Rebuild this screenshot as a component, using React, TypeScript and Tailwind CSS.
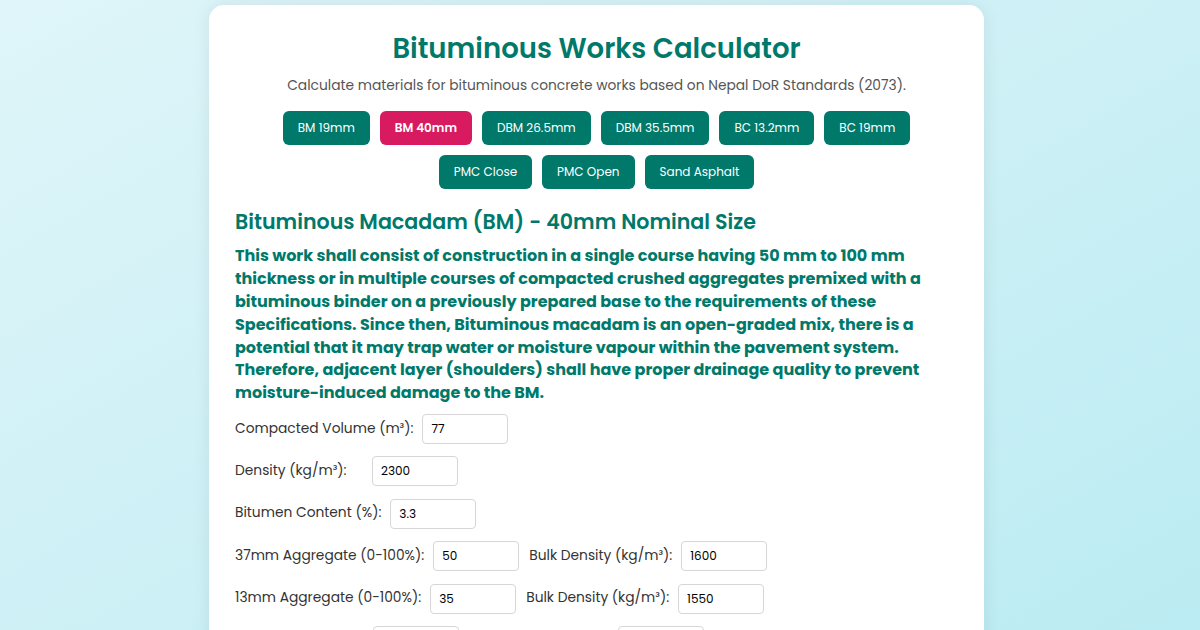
import { useState } from "react";

const mixes = [
  "BM 19mm",
  "BM 40mm",
  "DBM 26.5mm",
  "DBM 35.5mm",
  "BC 13.2mm",
  "BC 19mm",
  "PMC Close",
  "PMC Open",
  "Sand Asphalt",
];

function Field({
  label,
  value,
  labelClass = "",
}: {
  label: string;
  value: string;
  labelClass?: string;
}) {
  return (
    <div className="flex items-center gap-[9px]">
      <label className={`shrink-0 whitespace-nowrap text-[13.8px] text-[#333] ${labelClass}`}>
        {label}
      </label>
      <input
        defaultValue={value}
        className="h-[30px] w-[86px] rounded-[4px] border border-[#d6d6d6] px-2 text-[12px] text-black outline-none"
      />
    </div>
  );
}

export default function App() {
  const [active, setActive] = useState("BM 40mm");

  return (
    <div
      className="flex min-h-[630px] justify-center bg-gradient-to-br from-[#dff5f9] to-[#b9ebf2] pr-[7px] pt-[5px]"
      style={{ fontFamily: "Poppins, 'Open Sans', sans-serif" }}
    >
      <div className="w-[775px] rounded-[15px] bg-white px-[26px] pt-[27px] pb-10 shadow-[0_0_18px_rgba(0,0,0,0.08)]">
        <h1 className="text-center text-[27.5px] leading-[1.2] font-semibold text-[#00796b]">
          Bituminous Works Calculator
        </h1>
        <p className="mt-[11px] text-center text-[13.8px] leading-[1.5] text-[#555]">
          Calculate materials for bituminous concrete works based on Nepal DoR Standards (2073).
        </p>

        <div className="mt-[14px] flex flex-wrap justify-center gap-[10px]">
          {mixes.map((m) => (
            <button
              key={m}
              onClick={() => setActive(m)}
              className={`h-[34px] rounded-[6px] px-[15px] text-[12px] text-white ${
                active === m ? "bg-[#d81b60] font-semibold" : "bg-[#00796b] font-normal"
              }`}
            >
              {m}
            </button>
          ))}
        </div>

        <h2 className="mt-[20px] text-[20.6px] leading-[1.3] font-semibold text-[#00796b]">
          Bituminous Macadam (BM) - 40mm Nominal Size
        </h2>
        <p className="mt-[10px] text-[16px] leading-[22.8px] font-bold text-[#00796b]">
          This work shall consist of construction in a single course having 50 mm to 100 mm
          thickness or in multiple courses of compacted crushed aggregates premixed with a
          bituminous binder on a previously prepared base to the requirements of these
          Specifications. Since then, Bituminous macadam is an open-graded mix, there is a
          potential that it may trap water or moisture vapour within the pavement system.
          Therefore, adjacent layer (shoulders) shall have proper drainage quality to prevent
          moisture-induced damage to the BM.
        </p>

        <div className="mt-[9px] flex flex-col gap-[12.4px]">
          <div className="flex">
            <Field label="Compacted Volume (m³):" value="77" />
          </div>
          <div className="flex">
            <Field label="Density (kg/m³):" value="2300" labelClass="w-[128px]" />
          </div>
          <div className="flex">
            <Field label="Bitumen Content (%):" value="3.3" />
          </div>
          <div className="flex gap-[10px]">
            <Field label="37mm Aggregate (0-100%):" value="50" />
            <Field label="Bulk Density (kg/m³):" value="1600" />
          </div>
          <div className="flex gap-[10px]">
            <Field label="13mm Aggregate (0-100%):" value="35" />
            <Field label="Bulk Density (kg/m³):" value="1550" />
          </div>
          <div className="flex gap-[10px]">
            <Field label="Filler (0-100%):" value="15" labelClass="w-[129px]" />
            <Field label="Bulk Density (kg/m³):" value="1500" labelClass="w-[140px]" />
          </div>
        </div>
      </div>
    </div>
  );
}
